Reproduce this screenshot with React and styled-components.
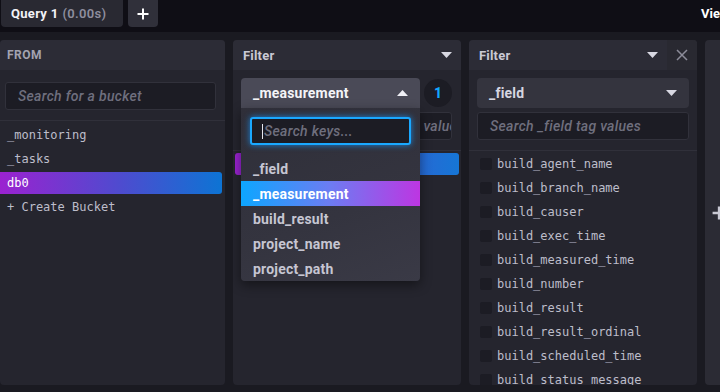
import React from "react";
import styled, { createGlobalStyle } from "styled-components";

const GlobalStyle = createGlobalStyle`
  html, body {
    margin: 0;
    padding: 0;
    background: #1a1a21;
    overflow: hidden;
  }
  * { box-sizing: border-box; }
`;

const SANS = `Roboto, "Liberation Sans", Arial, sans-serif`;
const MONO = `"DejaVu Sans Mono", "Liberation Mono", monospace`;

const Screen = styled.div`
  width: 720px;
  height: 392px;
  overflow: hidden;
  background: #1a1a21;
  font-family: ${SANS};
`;

const TopBar = styled.div`
  display: flex;
  align-items: flex-start;
  height: 32px;
  background: #0f0e15;
  width: 900px;
`;

const Tabs = styled.div`
  display: flex;
  gap: 5px;
  width: 701px;
  flex-shrink: 0;
  padding-left: 1px;
`;

const Tab = styled.div`
  height: 27px;
  padding: 0 17px 0 10px;
  display: flex;
  align-items: center;
  gap: 4px;
  background: #292932;
  border-radius: 0 0 4px 4px;
  font-size: 13px;
  font-weight: 700;
  letter-spacing: 0.3px;
  color: #f2f2f7;
`;

const Muted = styled.span`
  color: #8e8e9e;
  font-weight: 600;
`;

const AddTab = styled.div`
  width: 30px;
  height: 27px;
  display: flex;
  align-items: center;
  justify-content: center;
  background: #30303a;
  border-radius: 0 0 4px 4px;
`;

const ViewRaw = styled.div`
  height: 27px;
  display: flex;
  align-items: center;
  font-size: 13px;
  font-weight: 700;
  color: #ffffff;
  white-space: nowrap;
`;

const Columns = styled.div`
  display: flex;
  gap: 8px;
  padding: 8px 0 7px;
  height: 360px;
  width: 900px;
`;

const Panel = styled.div`
  flex: 0 0 ${({ w }) => w}px;
  display: flex;
  flex-direction: column;
  background: #25252e;
  border-radius: 4px;
  overflow: hidden;
`;

const AddPanel = styled(Panel)`
  background: #2b2b34;
  align-items: flex-start;
  justify-content: center;
  padding-left: 7px;
`;

const Header = styled.div`
  height: 30px;
  flex-shrink: 0;
  display: flex;
  align-items: center;
  background: #2c2c36;
  padding-left: ${({ pl }) => pl || 10}px;
  font-size: ${({ small }) => (small ? 12 : 13)}px;
  font-weight: 700;
  letter-spacing: ${({ small }) => (small ? "0.5px" : "0.2px")};
  color: ${({ small }) => (small ? "#a3a3b1" : "#c9c9d4")};
`;

const HeaderTitle = styled.div`
  flex: 1;
`;

const HeaderCaret = styled.div`
  width: 30px;
  height: 30px;
  display: flex;
  align-items: center;
  justify-content: center;
`;

const CloseBtn = styled.div`
  width: 30px;
  height: 30px;
  display: flex;
  align-items: center;
  justify-content: center;
  background: #292931;
`;

const Body = styled.div`
  padding: ${({ pad }) => pad};
  flex-shrink: 0;
  border-bottom: 1px solid #30303a;
`;

const SearchBox = styled.div`
  height: 28px;
  margin-top: ${({ mt }) => mt || 0}px;
  display: flex;
  align-items: center;
  padding-left: 12px;
  background: #1c1c24;
  border: 1px solid #31313b;
  border-radius: 3px;
  font-size: 14px;
  letter-spacing: 0.3px;
  font-style: italic;
  font-weight: 500;
  color: #6f6f7e;
  white-space: nowrap;
  overflow: hidden;
`;

const List = styled.div`
  flex: 1;
  overflow: hidden;
  padding: ${({ pad }) => pad || "0"};
`;

const BucketItem = styled.div`
  height: 22px;
  margin-bottom: 2px;
  margin-right: 3px;
  display: flex;
  align-items: center;
  padding-left: 7px;
  border-radius: 0 3px 3px 0;
  font-family: ${MONO};
  font-size: 12px;
  color: ${({ active }) => (active ? "#ffffff" : "#bdbdca")};
  background: ${({ active }) =>
    active ? "linear-gradient(90deg, #9b22d0 0%, #4d4ccf 55%, #0d74d4 100%)" : "transparent"};
`;

const SelectRow = styled.div`
  display: flex;
  align-items: center;
  gap: 4px;
  position: relative;
`;

const Select = styled.div`
  flex: 1;
  height: 30px;
  display: flex;
  align-items: center;
  justify-content: space-between;
  padding: 0 12px 0 12px;
  background: ${({ open }) => (open ? "#4a4a57" : "#34343e")};
  border-radius: ${({ open }) => (open ? "4px 4px 0 0" : "4px")};
  font-size: 14px;
  font-weight: 700;
  letter-spacing: 0.2px;
  color: ${({ open }) => (open ? "#f4f4f8" : "#d6d6e0")};
  position: relative;
`;

const Badge = styled.div`
  width: 28px;
  height: 28px;
  border-radius: 50%;
  background: #1c1c24;
  display: flex;
  align-items: center;
  justify-content: center;
  color: #11a6ff;
  font-size: 14px;
  font-weight: 800;
`;

const Menu = styled.div`
  position: absolute;
  top: 100%;
  left: 0;
  right: 0;
  z-index: 5;
  padding-top: 9px;
  background: linear-gradient(160deg, #2f2f39 0%, #34343f 60%, #3a3a46 100%);
  border-radius: 0 0 4px 4px;
  box-shadow: 0 4px 12px rgba(0, 0, 0, 0.45);
`;

const MenuSearch = styled.div`
  height: 28px;
  margin: 0 9px 11px;
  display: flex;
  align-items: center;
  padding-left: 10px;
  background: #1c1c24;
  border: 2px solid #1aa8ff;
  border-radius: 3px;
  box-shadow: 0 0 6px rgba(20, 150, 255, 0.8);
  font-size: 14px;
  letter-spacing: 0.3px;
  font-style: italic;
  font-weight: 500;
  color: #6f6f7e;
`;

const Cursor = styled.span`
  display: inline-block;
  width: 1px;
  height: 15px;
  background: #e6e6ee;
  margin-right: 1px;
`;

const MenuItem = styled.div`
  height: 25px;
  display: flex;
  align-items: center;
  padding-left: 12px;
  font-size: 14px;
  font-weight: 700;
  letter-spacing: 0.2px;
  color: ${({ active }) => (active ? "#ffffff" : "#c6c6d2")};
  background: ${({ active }) =>
    active ? "linear-gradient(90deg, #0da6ff 0%, #6d7cf2 50%, #bd36e2 100%)" : "transparent"};
`;

const ValueRow = styled.div`
  height: 22px;
  border-radius: 3px;
  background: linear-gradient(90deg, #9b22d0 0%, #4d4ccf 40%, #1676d6 100%);
`;

const CheckRow = styled.div`
  height: 24px;
  display: flex;
  align-items: center;
  gap: 5px;
  padding-left: 11px;
  font-family: ${MONO};
  font-size: 12px;
  color: #bdbdca;
  white-space: nowrap;
`;

const Check = styled.span`
  width: 12px;
  height: 12px;
  border-radius: 2px;
  background: #1c1c24;
  flex-shrink: 0;
`;

const Caret = ({ up, color = "#d8d8e2" }) => (
  <svg width="11" height="6" viewBox="0 0 11 6">
    <polygon points={up ? "0,6 11,6 5.5,0" : "0,0 11,0 5.5,6"} fill={color} />
  </svg>
);

const Plus = ({ size = 12, color = "#ffffff", stroke = 2 }) => (
  <svg width={size} height={size} viewBox="0 0 12 12">
    <path d="M6 0.5V11.5M0.5 6H11.5" stroke={color} strokeWidth={stroke} />
  </svg>
);

const Cross = () => (
  <svg width="12" height="12" viewBox="0 0 12 12">
    <path d="M1 1L11 11M11 1L1 11" stroke="#8c8c99" strokeWidth="1.5" />
  </svg>
);

const buckets = ["_monitoring", "_tasks", "db0"];
const keys = ["_field", "_measurement", "build_result", "project_name", "project_path"];
const fields = [
  "build_agent_name",
  "build_branch_name",
  "build_causer",
  "build_exec_time",
  "build_measured_time",
  "build_number",
  "build_result",
  "build_result_ordinal",
  "build_scheduled_time",
  "build_status_message",
];

export default function App() {
  return (
    <Screen>
      <GlobalStyle />
      <TopBar>
        <Tabs>
          <Tab>
            Query 1 <Muted>(0.00s)</Muted>
          </Tab>
          <AddTab>
            <Plus />
          </AddTab>
        </Tabs>
        <ViewRaw>View Raw Data</ViewRaw>
      </TopBar>
      <Columns>
        <Panel w={225}>
          <Header small pl={7}>
            <HeaderTitle>FROM</HeaderTitle>
          </Header>
          <Body pad="12px 9px 10px 5px">
            <SearchBox>Search for a bucket</SearchBox>
          </Body>
          <List pad="3px 0 0">
            {buckets.map((b) => (
              <BucketItem key={b} active={b === "db0"}>
                {b}
              </BucketItem>
            ))}
            <BucketItem>+ Create Bucket</BucketItem>
          </List>
        </Panel>

        <Panel w={228}>
          <Header>
            <HeaderTitle>Filter</HeaderTitle>
            <HeaderCaret>
              <Caret />
            </HeaderCaret>
          </Header>
          <Body pad="8px 9px 10px 8px">
            <SelectRow>
              <Select open>
                _measurement
                <Caret up color="#f0f0f6" />
                <Menu>
                  <MenuSearch>
                    <Cursor />
                    Search keys...
                  </MenuSearch>
                  {keys.map((k) => (
                    <MenuItem key={k} active={k === "_measurement"}>
                      {k}
                    </MenuItem>
                  ))}
                </Menu>
              </Select>
              <Badge>1</Badge>
            </SelectRow>
            <SearchBox mt={4}>Search _measurement tag values</SearchBox>
          </Body>
          <List pad="2px 2px 0">
            <ValueRow />
          </List>
        </Panel>

        <Panel w={228}>
          <Header>
            <HeaderTitle>Filter</HeaderTitle>
            <HeaderCaret>
              <Caret />
            </HeaderCaret>
            <CloseBtn>
              <Cross />
            </CloseBtn>
          </Header>
          <Body pad="8px 8px 10px 8px">
            <SelectRow>
              <Select>
                _field
                <Caret />
              </Select>
            </SelectRow>
            <SearchBox mt={4}>Search _field tag values</SearchBox>
          </Body>
          <List pad="1px 0 0">
            {fields.map((f) => (
              <CheckRow key={f}>
                <Check />
                {f}
              </CheckRow>
            ))}
          </List>
        </Panel>

        <AddPanel w={200}>
          <Plus size={14} color="#c9c9d4" stroke={2} />
        </AddPanel>
      </Columns>
    </Screen>
  );
}
